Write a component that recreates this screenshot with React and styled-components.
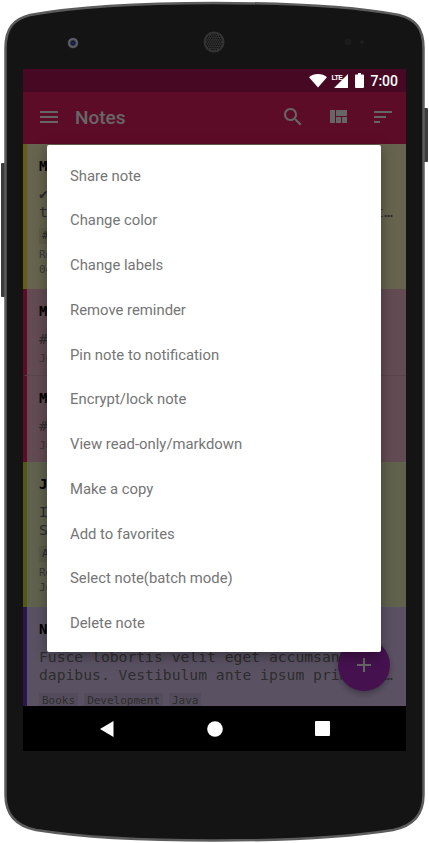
import React from "react";
import styled, { createGlobalStyle } from "styled-components";

const GlobalStyle = createGlobalStyle`
  html, body {
    margin: 0;
    padding: 0;
    background: #fff;
  }
`;

const Page = styled.div`
  position: relative;
  box-sizing: border-box;
  width: 429px;
  height: 843px;
  padding: 69px 23px 92px;
  overflow: hidden;
`;

const Shell = styled.svg`
  position: absolute;
  top: 0;
  left: 0;
`;

const Screen = styled.div`
  position: relative;
  display: flex;
  flex-direction: column;
  height: 682px;
  overflow: hidden;
  background: #000;
`;

const StatusBar = styled.div`
  display: flex;
  align-items: center;
  justify-content: flex-end;
  flex: none;
  height: 23px;
  padding-right: 8px;
  background: #470823;
`;

const Clock = styled.span`
  margin-left: 6px;
  font: 500 14px Roboto, sans-serif;
  color: #fff;
`;

const Signal = styled.div`
  position: relative;
  display: flex;
  margin-left: 7px;
`;

const Lte = styled.span`
  position: absolute;
  top: 0;
  left: -3px;
  font: 700 7px/8px "Liberation Sans", sans-serif;
  letter-spacing: -0.6px;
  color: #fff;
`;

const BatteryIcon = styled.svg`
  margin-left: 7px;
`;

const AppArea = styled.div`
  position: relative;
  flex: 1;
  min-height: 0;
  display: flex;
  flex-direction: column;
  overflow: hidden;
`;

const Toolbar = styled.div`
  display: flex;
  align-items: center;
  flex: none;
  height: 52px;
  padding: 0 11px 2px 14px;
  box-sizing: border-box;
  background: #e91e63;
  color: #fff;
`;

const ToolbarTitle = styled.span`
  flex: 1;
  margin-left: 14px;
  padding-top: 1px;
  font: 500 19px Roboto, sans-serif;
`;

const ToolbarIcon = styled.svg`
  width: 24px;
  height: 24px;
  fill: currentColor;
  margin-left: ${(p) => (p.$first ? 0 : 21)}px;
`;

const NoteList = styled.div`
  flex: 1;
  min-height: 0;
`;

const Note = styled.div`
  padding: 13px 13px ${(p) => p.$bottom ?? 12}px 12px;
  border-left: 4px solid ${(p) => p.$strip};
  border-top: ${(p) => (p.$divided ? "1px solid rgba(0,0,0,.08)" : "none")};
  background: ${(p) => p.$bg};
`;

const NoteTitle = styled.div`
  font: 700 14px/18px "DejaVu Sans Mono", monospace;
  color: #000;
  margin-bottom: 10px;
  white-space: nowrap;
`;

const NoteBody = styled.div`
  font: 14.7px/18px "DejaVu Sans Mono", monospace;
  color: #707070;
  margin-bottom: ${(p) => p.$after ?? 7}px;
`;

const HashLine = styled.div`
  font: 14px/18px "DejaVu Sans Mono", monospace;
  color: #707070;
  white-space: nowrap;
`;

const NoteLine = styled.div`
  white-space: nowrap;
  overflow: hidden;
  text-overflow: ellipsis;
`;

const Tags = styled.div`
  display: flex;
  gap: 6px;
  height: 16px;
`;

const Tag = styled.span`
  padding: 0 3px;
  font: 11px/16px "DejaVu Sans Mono", monospace;
  color: #707070;
  background: rgba(0, 0, 0, 0.07);
`;

const Meta = styled.div`
  margin-top: ${(p) => p.$top ?? 3}px;
  font: 11px/15px "DejaVu Sans Mono", monospace;
  color: #8a8a8a;
  white-space: nowrap;
`;

const Fab = styled.div`
  position: absolute;
  right: 16px;
  bottom: 15px;
  display: flex;
  align-items: center;
  justify-content: center;
  width: 52px;
  height: 52px;
  border-radius: 50%;
  background: #ac2dc6;
  box-shadow: 0 3px 6px rgba(0, 0, 0, 0.3);
  color: #fff;
`;

const Scrim = styled.div`
  position: absolute;
  inset: 0;
  background: rgba(0, 0, 0, 0.6);
`;

const Menu = styled.div`
  position: absolute;
  top: 53px;
  left: 24px;
  box-sizing: border-box;
  width: 334px;
  height: 507px;
  padding: 8.4px 0 6px;
  background: #fff;
  border-radius: 2px;
  box-shadow: 0 4px 14px rgba(0, 0, 0, 0.35);
`;

const MenuItem = styled.div`
  display: flex;
  align-items: center;
  height: 44.73px;
  padding-left: 23px;
  font: 400 14.85px Roboto, sans-serif;
  color: #757575;
`;

const NavBar = styled.div`
  display: grid;
  grid-template-columns: repeat(3, 107.5px);
  justify-content: center;
  justify-items: center;
  align-items: center;
  flex: none;
  height: 45px;
  background: #000;
`;

const menuItems = [
  "Share note",
  "Change color",
  "Change labels",
  "Remove reminder",
  "Pin note to notification",
  "Encrypt/lock note",
  "View read-only/markdown",
  "Make a copy",
  "Add to favorites",
  "Select note(batch mode)",
  "Delete note",
];

const speakerDots = [];
for (let row = -4; row <= 4; row++) {
  for (let col = -4; col <= 4; col++) {
    const x = col * 2.2 + (row % 2 ? 1.1 : 0);
    const y = row * 1.9;
    if (x * x + y * y < 72) speakerDots.push([214 + x, 42 + y]);
  }
}

function DeviceShell() {
  return (
    <Shell width="429" height="843" viewBox="0 0 429 843">
      <defs>
        <radialGradient id="lens">
          <stop offset="0" stopColor="#2a2fa8" />
          <stop offset="0.3" stopColor="#14162c" />
          <stop offset="0.75" stopColor="#6a6d74" />
          <stop offset="1" stopColor="#2a2a2a" />
        </radialGradient>
      </defs>
      <rect x="1" y="163" width="6" height="134" rx="1" fill="#3c3c3c" />
      <rect x="422" y="108" width="6" height="54" rx="1" fill="#3c3c3c" />
      <path
        d="M5.5 48 C5.5 28 14 19 30 15 C80 6 150 3 214 3 C280 3 350 6 399 15 C415 19 423.5 28 423.5 48 L423.5 795 C423.5 815 413 826 393 830 C350 837 280 840.5 214 840.5 C150 840.5 80 837 36 830 C16 826 5.5 815 5.5 795 Z"
        fill="#141414"
        stroke="#5c5c5c"
        strokeWidth="2.5"
      />
      <circle cx="73" cy="43" r="5.5" fill="url(#lens)" />
      <circle cx="214" cy="42" r="10.5" fill="#333" />
      {speakerDots.map(([x, y]) => (
        <circle key={`${x}-${y}`} cx={x} cy={y} r="0.7" fill="#0c0c0c" />
      ))}
      <circle cx="348" cy="42" r="3.5" fill="#1c1c1c" />
      <circle cx="362" cy="42" r="2" fill="#1e1e1e" />
    </Shell>
  );
}

function App() {
  return (
    <Page>
      <GlobalStyle />
      <DeviceShell />
      <Screen>
        <StatusBar>
          <svg width="18" height="14" viewBox="0 0 18 14">
            <path d="M9 13.5 L0 3.2 C2.4 1.2 5.5 0 9 0 C12.5 0 15.6 1.2 18 3.2 Z" fill="#fff" />
          </svg>
          <Signal>
            <svg width="14" height="14" viewBox="0 0 14 14">
              <path d="M0 14 L14 0 L14 14 Z" fill="#fff" />
            </svg>
            <Lte>LTE</Lte>
          </Signal>
          <BatteryIcon width="9" height="15" viewBox="0 0 9 15">
            <path d="M3 0 H6 V1.5 H8 A1 1 0 0 1 9 2.5 V14 A1 1 0 0 1 8 15 H1 A1 1 0 0 1 0 14 V2.5 A1 1 0 0 1 1 1.5 H3 Z" fill="#fff" />
          </BatteryIcon>
          <Clock>7:00</Clock>
        </StatusBar>
        <AppArea>
          <Toolbar>
            <ToolbarIcon $first viewBox="0 0 24 24">
              <path d="M3 18h18v-2H3v2zm0-5h18v-2H3v2zm0-7v2h18V6H3z" />
            </ToolbarIcon>
            <ToolbarTitle>Notes</ToolbarTitle>
            <ToolbarIcon $first viewBox="0 0 24 24">
              <path d="M15.5 14h-.79l-.28-.27C15.41 12.59 16 11.11 16 9.5 16 5.91 13.09 3 9.5 3S3 5.91 3 9.5 5.91 16 9.5 16c1.61 0 3.09-.59 4.23-1.57l.27.28v.79l5 4.99L20.49 19l-4.99-5zm-6 0C7.01 14 5 11.99 5 9.5S7.01 5 9.5 5 14 7.01 14 9.5 11.99 14 9.5 14z" />
            </ToolbarIcon>
            <ToolbarIcon viewBox="0 0 24 24">
              <path d="M10 18h5v-6h-5v6zm-6 0h5V5H4v13zm12 0h5v-6h-5v6zM10 5v6h11V5H10z" />
            </ToolbarIcon>
            <ToolbarIcon viewBox="0 0 24 24">
              <path d="M3 18h6v-2H3v2zM3 6v2h18V6H3zm0 7h12v-2H3v2z" />
            </ToolbarIcon>
          </Toolbar>
          <NoteList>
            <Note $bg="#fff9c4" $strip="#ffeb3b">
              <NoteTitle>Meeting agenda</NoteTitle>
              <NoteBody>
                <NoteLine>✔ Review the release plan</NoteLine>
                <NoteLine>the quarterly budget and the roadmap items for next</NoteLine>
              </NoteBody>
              <Tags>
                <Tag>#Work</Tag>
              </Tags>
              <Meta>Reminder</Meta>
              <Meta $top={0}>04/12/2016</Meta>
            </Note>
            <Note $bg="#f8bbd0" $strip="#e91e63" $bottom={9}>
              <NoteTitle>Markdown notes</NoteTitle>
              <HashLine>#Ideas</HashLine>
              <Meta>Jun 12, 2016</Meta>
            </Note>
            <Note $bg="#f8bbd0" $strip="#e91e63" $bottom={9} $divided>
              <NoteTitle>Movies to watch</NoteTitle>
              <HashLine>#Home</HashLine>
              <Meta>Jun 10, 2016</Meta>
            </Note>
            <Note $bg="#f0f4c3" $strip="#cddc39">
              <NoteTitle>Java snippets</NoteTitle>
              <NoteBody>
                <NoteLine>In hac habitasse platea dictumst</NoteLine>
                <NoteLine>Sed a libero ut nisi</NoteLine>
              </NoteBody>
              <Tags>
                <Tag>Android</Tag>
              </Tags>
              <Meta>Reminder</Meta>
              <Meta $top={0}>Jun 02, 2016</Meta>
            </Note>
            <Note $bg="#e2cdf8" $strip="#673ab7">
              <NoteTitle>Notes on books</NoteTitle>
              <NoteBody $after={9}>
                <NoteLine>Fusce lobortis velit eget accumsan</NoteLine>
                <NoteLine>dapibus. Vestibulum ante ipsum primis in faucibus</NoteLine>
              </NoteBody>
              <Tags>
                <Tag>Books</Tag>
                <Tag>Development</Tag>
                <Tag>Java</Tag>
              </Tags>
            </Note>
          </NoteList>
          <Fab>
            <svg width="14" height="14" viewBox="0 0 14 14">
              <path d="M6 0h2v6h6v2H8v6H6V8H0V6h6z" fill="#fff" />
            </svg>
          </Fab>
          <Scrim />
          <Menu>
            {menuItems.map((item) => (
              <MenuItem key={item}>{item}</MenuItem>
            ))}
          </Menu>
        </AppArea>
        <NavBar>
          <svg width="14" height="16" viewBox="0 0 14 16">
            <path d="M13.5 0 V16 L0 8 Z" fill="#fff" />
          </svg>
          <svg width="16" height="16" viewBox="0 0 16 16">
            <circle cx="8" cy="8" r="7.8" fill="#fff" />
          </svg>
          <svg width="15" height="15" viewBox="0 0 15 15">
            <rect width="15" height="15" rx="1" fill="#fff" />
          </svg>
        </NavBar>
      </Screen>
    </Page>
  );
}

export default App;
